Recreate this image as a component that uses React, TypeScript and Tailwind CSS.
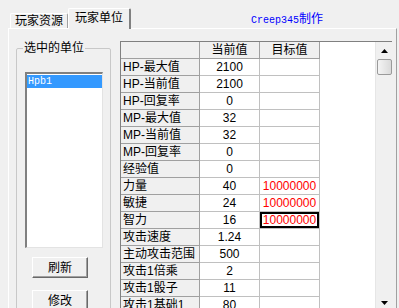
import React from 'react';

type Row = { label: string; cur: string; target?: string; selected?: boolean };

const rows: Row[] = [
  { label: 'HP-最大值', cur: '2100' },
  { label: 'HP-当前值', cur: '2100' },
  { label: 'HP-回复率', cur: '0' },
  { label: 'MP-最大值', cur: '32' },
  { label: 'MP-当前值', cur: '32' },
  { label: 'MP-回复率', cur: '0' },
  { label: '经验值', cur: '0' },
  { label: '力量', cur: '40', target: '10000000' },
  { label: '敏捷', cur: '24', target: '10000000' },
  { label: '智力', cur: '16', target: '10000000', selected: true },
  { label: '攻击速度', cur: '1.24' },
  { label: '主动攻击范围', cur: '500' },
  { label: '攻击1倍乘', cur: '2' },
  { label: '攻击1骰子', cur: '11' },
  { label: '攻击1基础1', cur: '80' },
];

const FONT = "font-['Liberation_Sans','Noto_Sans_CJK_SC',sans-serif]";

const Arrow: React.FC<{ down?: boolean }> = ({ down }) => (
  <svg width="7" height="4" viewBox="0 0 7 4">
    {down ? <polygon points="0,0 7,0 3.5,4" fill="#000" /> : <polygon points="3.5,0 7,4 0,4" fill="#000" />}
  </svg>
);

const WinButton: React.FC<{ children: React.ReactNode }> = ({ children }) => (
  <button className="ml-[15px] w-[56px] h-[21px] bg-[#f0f0f0] border border-t-white border-l-white border-r-[#696969] border-b-[#696969] shadow-[inset_-1px_-1px_0_#a0a0a0] text-[12px] leading-none text-black">
    {children}
  </button>
);

export default function App() {
  return (
    <div className={`w-[399px] h-[308px] overflow-hidden bg-[#f0f0f0] text-black ${FONT}`}>
      {/* Tab strip */}
      <div className="flex items-end h-[28px]">
        <div className="ml-[10px] w-[58px] h-[15px] border-l border-t border-white border-r border-r-[#a0a0a0] rounded-t-[2px] flex items-center justify-center text-[12px] leading-none">
          玩家资源
        </div>
        <div className="relative z-10 -mb-[1px] w-[63px] h-[21px] bg-[#f0f0f0] border-l border-t border-white border-r-2 border-r-[#808080] rounded-t-[2px] flex items-start justify-center pt-[3px] text-[12px] leading-none">
          玩家单位
        </div>
        <div className="ml-[120px] self-center mt-[7px] text-[#0000ff] leading-none whitespace-nowrap">
          <span className="font-['Liberation_Mono',monospace] text-[10px]">Creep345</span>
          <span className="font-['Noto_Sans_CJK_SC',sans-serif] text-[12px]">制作</span>
        </div>
      </div>

      {/* Tab panel */}
      <div className="ml-[8px] w-[389px] h-[280px] border-l border-t border-white border-r border-r-[#a0a0a0] flex items-start pl-[7px]">
        {/* Group box */}
        <fieldset className="mt-[12px] w-[95px] h-[300px] border border-[#c8c8c8] rounded-[2px] shrink-0">
          <legend className="ml-[6px] px-[1px] text-[12px] leading-[14px]">选中的单位</legend>
          <div className="ml-[8px] mt-[17px] w-[78px] h-[176px] bg-white border-t-2 border-l-2 border-t-[#808080] border-l-[#808080] border-r border-b border-r-[#e3e3e3] border-b-[#e3e3e3] pt-[1px]">
            <div className="h-[13px] bg-[#3399ff] text-white font-['Liberation_Mono',monospace] text-[10px] leading-[13px] pl-[1px]">
              Hpb1
            </div>
          </div>
          <div className="mt-[9px] flex flex-col gap-[12px]">
            <WinButton>刷新</WinButton>
            <WinButton>修改</WinButton>
          </div>
        </fieldset>

        {/* Data grid */}
        <div className="ml-[9px] mt-[12px] w-[272px] h-[270px] flex bg-white border-l border-t border-[#808080] shrink-0">
          <div className="flex-1 text-[12px] leading-none">
            <div className="flex h-[17px]">
              <div className="w-[79px] bg-[#f0f0f0] border-r border-b border-[#a0a0a0]" />
              <div className="w-[60px] bg-[#f0f0f0] border-r border-b border-[#a0a0a0] flex items-center justify-center">当前值</div>
              <div className="w-[60px] bg-[#f0f0f0] border-r border-b border-[#a0a0a0] flex items-center justify-center">目标值</div>
            </div>
            {rows.map((r) => (
              <div key={r.label} className="flex h-[17px]">
                <div className="w-[79px] bg-[#f0f0f0] border-r border-b border-[#a0a0a0] flex items-center pl-[2px] whitespace-nowrap">
                  {r.label}
                </div>
                <div className="w-[60px] border-r border-b border-[#c0c0c0] flex items-center justify-center">
                  {r.cur}
                </div>
                <div
                  className={`w-[60px] border-r border-b border-[#c0c0c0] flex items-center justify-center text-[#ff0000] ${
                    r.selected ? 'shadow-[inset_0_0_0_2px_#000]' : ''
                  }`}
                >
                  {r.target}
                </div>
              </div>
            ))}
          </div>

          {/* Scrollbar */}
          <div className="w-[17px] h-full bg-[#f0f0f0] border-l border-[#e6e6e6] flex flex-col items-center">
            <div className="h-[17px] w-full flex items-center justify-center">
              <Arrow />
            </div>
            <div className="w-[15px] h-[16px] border border-[#9a9a9a] rounded-[2px] bg-gradient-to-r from-[#f4f4f4] to-[#dadada]" />
            <div className="flex-1" />
            <div className="h-[17px] w-full flex items-center justify-center">
              <Arrow down />
            </div>
          </div>
        </div>
      </div>
    </div>
  );
}
